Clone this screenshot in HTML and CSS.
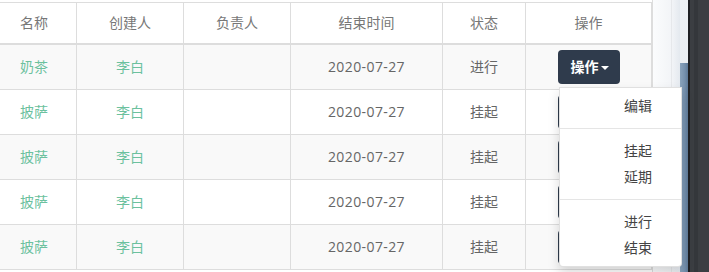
FILE: index.html
```html
<!DOCTYPE html>
<html lang="zh-CN">
<head>
<meta charset="utf-8">
<title>任务列表</title>
<link rel="stylesheet" href="styles.css">
</head>
<body>
<div class="screen">
  <div class="main">
    <div class="content">
      <table class="grid">
        <colgroup>
          <col style="width:85px">
          <col style="width:107px">
          <col style="width:107px">
          <col style="width:152px">
          <col style="width:83px">
          <col style="width:126px">
        </colgroup>
        <thead>
          <tr><th>名称</th><th>创建人</th><th>负责人</th><th>结束时间</th><th>状态</th><th>操作</th></tr>
        </thead>
        <tbody>
          <tr class="odd"><td class="link">奶茶</td><td class="link">李白</td><td></td><td class="date">2020-07-27</td><td>进行</td><td class="act"><button class="btn">操作<span class="caret"></span></button></td></tr>
          <tr><td class="link">披萨</td><td class="link">李白</td><td></td><td class="date">2020-07-27</td><td>挂起</td><td class="act"><button class="btn">操作<span class="caret"></span></button></td></tr>
          <tr class="odd"><td class="link">披萨</td><td class="link">李白</td><td></td><td class="date">2020-07-27</td><td>挂起</td><td class="act"><button class="btn">操作<span class="caret"></span></button></td></tr>
          <tr><td class="link">披萨</td><td class="link">李白</td><td></td><td class="date">2020-07-27</td><td>挂起</td><td class="act"><button class="btn">操作<span class="caret"></span></button></td></tr>
          <tr class="odd"><td class="link">披萨</td><td class="link">李白</td><td></td><td class="date">2020-07-27</td><td>挂起</td><td class="act"><button class="btn">操作<span class="caret"></span></button></td></tr>
        </tbody>
      </table>
      <div class="side"><div class="side-col"></div></div>
    </div>
    <div class="scrollbar"><div class="thumb"></div></div>
    <div class="dark"><div class="dark-strip"></div></div>
  </div>
  <ul class="menu">
    <li>编辑</li>
    <li class="divider"></li>
    <li>挂起</li>
    <li>延期</li>
    <li class="divider"></li>
    <li>进行</li>
    <li>结束</li>
  </ul>
</div>
</body>
</html>
```

FILE: styles.css
```css
html, body {
  margin: 0;
  padding: 0;
  background: #fff;
}
body {
  font-family: "Open Sans", "Noto Sans CJK SC", sans-serif;
  font-size: 14px;
  color: #666;
}
.screen {
  position: relative;
  width: 709px;
  height: 272px;
  overflow: hidden;
}
.main {
  display: flex;
  height: 272px;
}
.content {
  display: flex;
  width: 680px;
  overflow: hidden;
}
.grid {
  flex: none;
  width: 660px;
  margin-left: -9px;
  margin-top: 2px;
  border-collapse: collapse;
  table-layout: fixed;
  align-self: flex-start;
}
.grid th, .grid td {
  border: 1px solid #ddd;
  text-align: center;
  vertical-align: middle;
  padding: 0 8px;
  line-height: 20px;
}
.grid th {
  font-weight: normal;
  color: #777;
  height: 40px;
  border-bottom: 2px solid #ddd;
  border-top: 1px solid #ddd;
}
.grid td {
  height: 44px;
}
.grid td.date {
  letter-spacing: 0.4px;
}
.grid tr.odd td {
  background: #f9f9f9;
}
.grid td.link {
  color: #6cc19e;
}
.btn {
  display: inline-block;
  height: 34px;
  padding: 0 11px 0 13px;
  border: none;
  border-radius: 4px;
  background: #2f3b4c;
  color: #fff;
  font-family: inherit;
  font-size: 14px;
  font-weight: bold;
  line-height: 34px;
  cursor: pointer;
}
.caret {
  display: inline-block;
  width: 0;
  height: 0;
  margin-left: 2px;
  vertical-align: middle;
  border-top: 4px solid #fff;
  border-left: 4px solid transparent;
  border-right: 4px solid transparent;
}
.side {
  flex: 1;
  background: linear-gradient(to right, #fbfcfd 0%, #f2f4f7 70%, #e4e9ef 100%);
  border-left: 1px solid #ddd;
  display: flex;
  justify-content: flex-end;
}
.side-col {
  width: 8px;
  border-left: 1px solid #e6e8eb;
}
.scrollbar {
  width: 8px;
  background: linear-gradient(to bottom, #eef1f4, #dfe5ec);
  display: flex;
  flex-direction: column;
  padding-top: 63px;
}
.thumb {
  flex: 1;
  background: linear-gradient(to right, #8aa3bc, #7590ad 60%, #5f7a98);
}
.dark {
  flex: 1;
  background: #3b3e42;
  border-left: 2px solid #1f2023;
  display: flex;
  padding-left: 4px;
}
.dark-strip {
  width: 4px;
  background: #34373b;
}
.menu {
  position: absolute;
  left: 559px;
  top: 87px;
  width: 123px;
  box-sizing: border-box;
  margin: 0;
  padding: 5px 0;
  list-style: none;
  background: #fff;
  border: 1px solid rgba(0, 0, 0, 0.12);
  border-radius: 0 0 4px 4px;
  box-shadow: 0 6px 12px rgba(0, 0, 0, 0.15);
}
.menu li {
  padding: 3px 29px 3px 20px;
  line-height: 20px;
  text-align: right;
  color: #444;
}
.menu li.divider {
  height: 1px;
  padding: 0;
  margin: 9px 0;
  background: #e5e5e5;
}
```
